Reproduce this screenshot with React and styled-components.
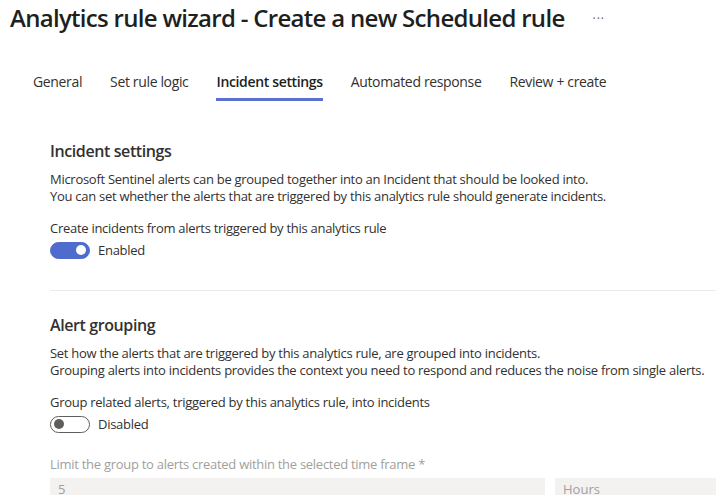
import styled, { createGlobalStyle } from "styled-components";

const GlobalStyle = createGlobalStyle`
  body {
    margin: 0;
    background: #ffffff;
    font-family: "Segoe UI", "Open Sans", sans-serif;
    color: #323130;
  }
`;

const tabs = [
  "General",
  "Set rule logic",
  "Incident settings",
  "Automated response",
  "Review + create",
];

export default function App() {
  return (
    <StyledPage>
      <GlobalStyle />
      <StyledHeader>
        <h1>Analytics rule wizard - Create a new Scheduled rule</h1>
        <span>···</span>
      </StyledHeader>
      <StyledTabs>
        {tabs.map((tab) => (
          <StyledTab key={tab} $active={tab === "Incident settings"}>
            {tab}
          </StyledTab>
        ))}
      </StyledTabs>

      <StyledSection $top="39px">
        <h2>Incident settings</h2>
        <StyledText>
          Microsoft Sentinel alerts can be grouped together into an Incident that
          should be looked into.
          <br />
          You can set whether the alerts that are triggered by this analytics rule
          should generate incidents.
        </StyledText>
        <StyledLabel>Create incidents from alerts triggered by this analytics rule</StyledLabel>
        <StyledToggleRow>
          <StyledToggle $on />
          <span>Enabled</span>
        </StyledToggleRow>
      </StyledSection>

      <StyledDivider />

      <StyledSection $top="23px">
        <h2>Alert grouping</h2>
        <StyledText>
          Set how the alerts that are triggered by this analytics rule, are grouped
          into incidents.
          <br />
          Grouping alerts into incidents provides the context you need to respond
          and reduces the noise from single alerts.
        </StyledText>
        <StyledLabel>Group related alerts, triggered by this analytics rule, into incidents</StyledLabel>
        <StyledToggleRow>
          <StyledToggle />
          <span>Disabled</span>
        </StyledToggleRow>
        <StyledLabel $disabled>
          Limit the group to alerts created within the selected time frame *
        </StyledLabel>
        <StyledFields>
          <StyledInput $width="495px">5</StyledInput>
          <StyledInput $width="161px">Hours</StyledInput>
        </StyledFields>
      </StyledSection>
    </StyledPage>
  );
}

const StyledPage = styled.div`
  width: 716px;
  height: 495px;
  overflow: hidden;
`;

const StyledHeader = styled.header`
  display: flex;
  align-items: center;
  gap: 28px;
  padding: 2px 0 0 10px;
  h1 {
    margin: 0;
    font-size: 24px;
    font-weight: 600;
    line-height: 32px;
    letter-spacing: -0.7px;
    color: #201f1e;
  }
  span {
    font-size: 12px;
    color: #605e5c;
    letter-spacing: 1px;
  }
`;

const StyledTabs = styled.nav`
  display: flex;
  gap: 28px;
  padding: 38px 0 0 33px;
`;

const StyledTab = styled.div`
  font-size: 14px;
  line-height: 20px;
  letter-spacing: -0.35px;
  padding-bottom: 6px;
  color: ${(p) => (p.$active ? "#201f1e" : "#323130")};
  font-weight: ${(p) => (p.$active ? 600 : 400)};
  border-bottom: 3px solid ${(p) => (p.$active ? "#5a6fd6" : "transparent")};
`;

const StyledSection = styled.section`
  display: flex;
  flex-direction: column;
  padding: 0 0 0 50px;
  margin-top: ${(p) => p.$top};
  h2 {
    margin: 0 0 9px;
    font-size: 16px;
    font-weight: 600;
    line-height: 22px;
    letter-spacing: -0.4px;
  }
`;

const StyledText = styled.p`
  margin: 0 0 14px;
  font-size: 13px;
  line-height: 17px;
  letter-spacing: -0.28px;
  white-space: nowrap;
`;

const StyledLabel = styled.div`
  font-size: 13px;
  line-height: 18px;
  letter-spacing: -0.28px;
  color: ${(p) => (p.$disabled ? "#a19f9d" : "#323130")};
  margin-top: ${(p) => (p.$disabled ? "22px" : "0")};
`;

const StyledToggleRow = styled.div`
  display: flex;
  align-items: center;
  gap: 8px;
  margin-top: 4px;
  font-size: 13px;
  letter-spacing: -0.28px;
`;

const StyledToggle = styled.div`
  position: relative;
  width: 40px;
  height: 17px;
  box-sizing: border-box;
  border-radius: 10px;
  background: ${(p) => (p.$on ? "#4f6bcd" : "#ffffff")};
  border: 1px solid ${(p) => (p.$on ? "#4f6bcd" : "#605e5c")};
  &::after {
    content: "";
    position: absolute;
    top: 2.5px;
    left: ${(p) => (p.$on ? "25px" : "3px")};
    width: 10px;
    height: 10px;
    border-radius: 50%;
    background: ${(p) => (p.$on ? "#ffffff" : "#605e5c")};
  }
`;

const StyledDivider = styled.hr`
  margin: 31px 0 0 50px;
  border: 0;
  border-top: 1px solid #edebe9;
`;

const StyledFields = styled.div`
  display: flex;
  gap: 10px;
  margin-top: 5px;
`;

const StyledInput = styled.div`
  flex: 0 0 ${(p) => p.$width};
  height: 32px;
  box-sizing: border-box;
  background: #f3f2f1;
  color: #a19f9d;
  font-size: 13px;
  padding: 2px 8px;
`;
